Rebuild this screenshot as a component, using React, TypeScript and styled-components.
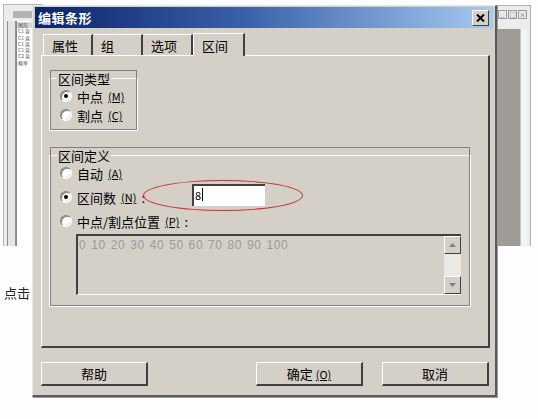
import React from 'react';
import styled, {createGlobalStyle} from 'styled-components';

const GlobalStyle = createGlobalStyle`
    html, body {
        margin: 0;
        padding: 0;
        background: #ffffff;
    }
    body {
        font-family: "Noto Sans CJK SC", "DejaVu Sans", sans-serif;
        font-size: 12px;
        color: #000;
    }
`

const Desktop = styled.div`
    position: relative;
    width: 538px;
    height: 419px;
    overflow: hidden;
    background: #fdfdfd;
`

// окна на заднем плане
const BackWindowLeft = styled.div`
    position: absolute;
    left: 3px;
    top: 4px;
    width: 40px;
    height: 242px;
    border-left: 1px solid #b8b8b8;
    border-top: 1px solid #b8b8b8;
    background: #ececec;
    display: flex;
    flex-direction: column;
    padding: 6px 0 0 3px;
    box-sizing: border-box;
    gap: 1px;
`

const BackTitle = styled.div`
    height: 7px;
    margin-left: 6px;
    background: #b4b4b4;
`

const BackList = styled.div`
    flex: 1;
    display: flex;
    margin-top: 2px;
`

const BackRails = styled.div`
    width: 7px;
    border-left: 1px solid #909090;
    border-right: 1px solid #909090;
    background: #e4e4e4;
`

const BackItems = styled.div`
    flex: 1;
    background: #fff;
    border-left: 1px solid #888;
    display: flex;
    flex-direction: column;
    padding-top: 1px;
`

const BackItem = styled.div<{ head?: boolean }>`
    font-size: 5px;
    line-height: 6.3px;
    color: #555;
    padding-left: 1px;
    white-space: nowrap;
    background: ${p => p.head ? '#d8d8d8' : 'transparent'};
`

const BackWindowRight = styled.div`
    position: absolute;
    left: 495px;
    top: 5px;
    width: 36px;
    height: 241px;
    background: #ececec;
    border-right: 1px solid #b0b0b0;
    border-top: 1px solid #b0b0b0;
    display: flex;
    flex-direction: column;
    box-sizing: border-box;
    padding: 4px 3px 0 2px;
`

const BackButtons = styled.div`
    display: flex;
    justify-content: flex-end;
    gap: 1px;
    height: 9px;
`

const BackBtn = styled.div`
    width: 7px;
    height: 7px;
    border: 1px solid #9a9a9a;
    background: #e8e8e8;
    font-size: 6px;
    line-height: 7px;
    text-align: center;
    color: #666;
`

const BackBody = styled.div`
    flex: 1;
    margin-top: 10px;
    display: flex;
`

const BackGray = styled.div`
    flex: 1;
    background: #9f9c97;
`

const BackStrip = styled.div`
    width: 6px;
    background: #f4f4f4;
    border-left: 1px solid #c4c4c4;
`

const ClickText = styled.div`
    position: absolute;
    left: 4px;
    top: 283px;
    font-size: 13px;
    color: #222;
`

// сам диалог
const Dialog = styled.div`
    position: absolute;
    left: 32px;
    top: 5px;
    width: 465px;
    height: 392px;
    box-sizing: border-box;
    background: #d4d0c8;
    border-top: 1px solid #e8e6e0;
    border-left: 1px solid #e8e6e0;
    border-right: 2px solid #5a5a5a;
    border-bottom: 2px solid #5a5a5a;
    box-shadow: 1px 1px 0 #9a9a9a;
    display: flex;
    flex-direction: column;
    padding: 1px 2px 0 2px;
`

const TitleBar = styled.div`
    height: 21px;
    background: linear-gradient(to right, #0a246a 0%, #3a5fa8 45%, #a6caf0 100%);
    display: flex;
    align-items: center;
    justify-content: space-between;
    padding: 0 4px 0 3px;
`

const TitleText = styled.span`
    color: #fff;
    font-weight: bold;
    font-size: 13px;
    letter-spacing: 0.5px;
`

const CloseButton = styled.div`
    width: 15px;
    height: 14px;
    background: #d4d0c8;
    border-top: 1px solid #fff;
    border-left: 1px solid #fff;
    border-right: 1px solid #404040;
    border-bottom: 1px solid #404040;
    display: flex;
    align-items: center;
    justify-content: center;
`

const TabStrip = styled.div`
    display: flex;
    margin: 4px 0 0 8px;
    height: 23px;
    align-items: flex-end;
`

const Tab = styled.div<{ active?: boolean }>`
    width: ${p => p.active ? 52 : 50}px;
    height: ${p => p.active ? 23 : 21}px;
    box-sizing: border-box;
    background: #d4d0c8;
    border-top: 1px solid #fff;
    border-left: ${p => p.active ? '1px solid #fff' : 'none'};
    border-right: 2px solid #404040;
    font-size: 13px;
    padding: 0 0 0 8px;
    display: flex;
    align-items: center;
    position: relative;
    z-index: ${p => p.active ? 2 : 1};
    margin-bottom: ${p => p.active ? -1 : 0}px;

    &:first-child {
        border-left: 1px solid #fff;
    }
`

const TabPanel = styled.div`
    margin-left: 6px;
    width: 449px;
    height: 293px;
    box-sizing: border-box;
    border-top: 1px solid #fff;
    border-left: 1px solid #fff;
    border-right: 2px solid #404040;
    border-bottom: 2px solid #404040;
    padding: 13px 0 0 7px;
    display: flex;
    flex-direction: column;
    gap: 15px;
`

const Group = styled.fieldset<{ w: number; h: number }>`
    width: ${p => p.w}px;
    height: ${p => p.h}px;
    box-sizing: border-box;
    margin: 0;
    padding: 0 0 0 10px;
    border: 1px solid #fff;
    outline: 1px solid #808080;
    outline-offset: -2px;
    display: flex;
    flex-direction: column;
    gap: 3px;
`

const Legend = styled.legend`
    font-size: 13px;
    padding: 0 1px;
    margin-left: -3px;
    background: #d4d0c8;
`

const RadioRow = styled.div<{ spaced?: boolean }>`
    display: flex;
    align-items: center;
    height: 16px;
    font-size: 13px;
    gap: 5px;
    position: relative;
    margin-top: ${p => p.spaced ? 5 : 0}px;
`

const Radio = styled.span<{ checked?: boolean }>`
    width: 10px;
    height: 10px;
    border-radius: 50%;
    background: #fff;
    box-shadow: inset 1px 1px 0 #808080, inset -1px -1px 0 #e8e6e0;
    border: 1px solid;
    border-color: #808080 #fff #fff #808080;
    display: flex;
    align-items: center;
    justify-content: center;

    &::after {
        content: '';
        width: 4px;
        height: 4px;
        border-radius: 50%;
        background: ${p => p.checked ? '#000' : 'transparent'};
    }
`

const Key = styled.span`
    text-decoration: underline;
    font-size: 11px;
`

const NumberInput = styled.div`
    position: absolute;
    left: 132px;
    top: -5px;
    width: 73px;
    height: 22px;
    box-sizing: border-box;
    background: #fff;
    border-top: 2px solid #404040;
    border-left: 2px solid #404040;
    font-size: 11px;
    padding: 1px 0 0 1px;
    display: flex;
    align-items: flex-start;
`

const Caret = styled.span`
    width: 1px;
    height: 13px;
    background: #000;
    margin-left: 1px;
    margin-top: 1px;
`

const RedEllipse = styled.div`
    position: absolute;
    left: 83px;
    top: -9px;
    width: 158px;
    height: 29px;
    border: 1px solid #c8303a;
    border-radius: 50%;
    box-shadow: 0 0 1px #e88;
    pointer-events: none;
`

const ListBox = styled.div`
    margin: 2px 0 0 16px;
    width: 385px;
    height: 61px;
    box-sizing: border-box;
    border-top: 2px solid #404040;
    border-left: 2px solid #404040;
    border-bottom: 1px solid #fff;
    display: flex;
`

const ListText = styled.div`
    flex: 1;
    color: #9a9a9a;
    font-family: "Liberation Sans", sans-serif;
    font-size: 12px;
    padding: 2px 0 0 1px;
    letter-spacing: 0.6px;
    word-spacing: 1px;
`

const ScrollBar = styled.div`
    width: 17px;
    display: flex;
    flex-direction: column;
    justify-content: space-between;
    background: #ebe9e4;
`

const ScrollBtn = styled.div`
    height: 16px;
    background: #d4d0c8;
    border-top: 1px solid #fff;
    border-left: 1px solid #fff;
    border-right: 1px solid #404040;
    border-bottom: 1px solid #404040;
    display: flex;
    align-items: center;
    justify-content: center;
`

const ButtonRow = styled.div`
    display: flex;
    margin: 14px 0 0 6px;
    gap: 19px;
`

const Button = styled.div<{ gapLeft?: number }>`
    width: 107px;
    height: 24px;
    box-sizing: border-box;
    margin-left: ${p => p.gapLeft || 0}px;
    border-top: 1px solid #fff;
    border-left: 1px solid #fff;
    border-right: 2px solid #404040;
    border-bottom: 2px solid #404040;
    display: flex;
    align-items: center;
    justify-content: center;
    font-size: 13px;
`

const Arrow = ({up}: { up?: boolean }) => (
    <svg width="7" height="4" viewBox="0 0 7 4">
        {up
            ? <polygon points="0,4 7,4 3.5,0" fill="#808080"/>
            : <polygon points="0,0 7,0 3.5,4" fill="#808080"/>}
    </svg>
)

export default function App() {
    return (
        <Desktop>
            <GlobalStyle/>
            <BackWindowLeft>
                <BackTitle/>
                <BackList>
                    <BackRails/>
                    <BackItems>
                        <BackItem head>图形</BackItem>
                        <BackItem>C1 直</BackItem>
                        <BackItem>C1 直</BackItem>
                        <BackItem>C1 直</BackItem>
                        <BackItem>C1 直</BackItem>
                        <BackItem>C2 直</BackItem>
                        <BackItem>概率</BackItem>
                    </BackItems>
                </BackList>
            </BackWindowLeft>
            <BackWindowRight>
                <BackButtons>
                    <BackBtn>_</BackBtn>
                    <BackBtn>□</BackBtn>
                    <BackBtn>×</BackBtn>
                </BackButtons>
                <BackBody>
                    <BackGray/>
                    <BackStrip/>
                </BackBody>
            </BackWindowRight>
            <ClickText>点击</ClickText>

            <Dialog>
                <TitleBar>
                    <TitleText>编辑条形</TitleText>
                    <CloseButton>
                        <svg width="9" height="8" viewBox="0 0 9 8">
                            <path d="M1 0.5 L8 7.5 M8 0.5 L1 7.5" stroke="#000" strokeWidth="2"/>
                        </svg>
                    </CloseButton>
                </TitleBar>

                <TabStrip>
                    <Tab>属性</Tab>
                    <Tab>组</Tab>
                    <Tab>选项</Tab>
                    <Tab active>区间</Tab>
                </TabStrip>

                <TabPanel>
                    <Group w={89} h={62}>
                        <Legend>区间类型</Legend>
                        <RadioRow><Radio checked/>中点<Key>(M)</Key></RadioRow>
                        <RadioRow><Radio/>割点<Key>(C)</Key></RadioRow>
                    </Group>

                    <Group w={422} h={161}>
                        <Legend>区间定义</Legend>
                        <RadioRow><Radio/>自动<Key>(A)</Key></RadioRow>
                        <RadioRow spaced>
                            <Radio checked/>区间数<Key>(N)</Key>:
                            <RedEllipse/>
                            <NumberInput>8<Caret/></NumberInput>
                        </RadioRow>
                        <RadioRow spaced><Radio/>中点/割点位置<Key>(P)</Key>:</RadioRow>
                        <ListBox>
                            <ListText>0 10 20 30 40 50 60 70 80 90 100</ListText>
                            <ScrollBar>
                                <ScrollBtn><Arrow up/></ScrollBtn>
                                <ScrollBtn><Arrow/></ScrollBtn>
                            </ScrollBar>
                        </ListBox>
                    </Group>
                </TabPanel>

                <ButtonRow>
                    <Button>帮助</Button>
                    <Button gapLeft={89}>确定<Key style={{marginLeft: 3}}>(O)</Key></Button>
                    <Button>取消</Button>
                </ButtonRow>
            </Dialog>
        </Desktop>
    );
}
